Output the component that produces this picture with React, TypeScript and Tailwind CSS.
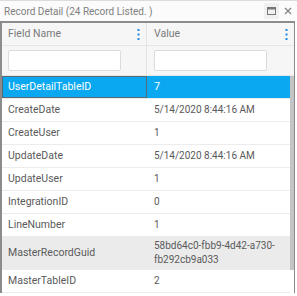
import React from 'react';

const ROWS: { name: string; value: string }[] = [
  { name: 'UserDetailTableID', value: '7' },
  { name: 'CreateDate', value: '5/14/2020 8:44:16 AM' },
  { name: 'CreateUser', value: '1' },
  { name: 'UpdateDate', value: '5/14/2020 8:44:16 AM' },
  { name: 'UpdateUser', value: '1' },
  { name: 'IntegrationID', value: '0' },
  { name: 'LineNumber', value: '1' },
  { name: 'MasterRecordGuid', value: '58bd64c0-fbb9-4d42-a730-fb292cb9a033' },
  { name: 'MasterTableID', value: '2' },
];

const Dots = () => (
  <svg width="3" height="11" viewBox="0 0 3 11" className="shrink-0">
    <rect x="0.5" y="0" width="2" height="2" fill="#1e88e5" />
    <rect x="0.5" y="4.5" width="2" height="2" fill="#1e88e5" />
    <rect x="0.5" y="9" width="2" height="2" fill="#1e88e5" />
  </svg>
);

export default function App() {
  return (
    <div
      className="w-[297px] h-[296px] overflow-hidden bg-white text-[#5a5a5a]"
      style={{ fontFamily: 'Roboto, "Liberation Sans", sans-serif' }}
    >
      {/* Title bar */}
      <div className="h-[21px] flex items-center border-t border-[#dcdcdc] bg-[#fbfbfb] pl-[4px] pr-[5px]">
        <span className="text-[10px] text-[#808080] flex-1 whitespace-nowrap">Record Detail (24 Record Listed. )</span>
        <div className="w-[15px] h-[16px] bg-[#f0f0f0] flex items-center justify-center mr-[5px]">
          <svg width="9" height="8" viewBox="0 0 9 8">
            <rect x="0.5" y="0.5" width="8" height="7" fill="none" stroke="#777" />
            <rect x="0.5" y="0.5" width="8" height="2" fill="#777" />
          </svg>
        </div>
        <svg width="8" height="8" viewBox="0 0 8 8">
          <path d="M1 1 L7 7 M7 1 L1 7" stroke="#888" strokeWidth="1.4" />
        </svg>
      </div>

      {/* Grid */}
      <div className="w-[295px] border-l-2 border-t-2 border-r border-[#8c8c8c]">
        {/* Header */}
        <div className="flex h-[23px] bg-[#f6f6f6] border-b border-[#e6e6e6] text-[10.5px] text-[#7a7a7a]">
          <div className="w-[145px] flex items-center justify-between pl-[6px] pr-[6px] border-r border-[#e3e3e3]">
            <span>Field Name</span>
            <Dots />
          </div>
          <div className="flex-1 flex items-center justify-between pl-[7px] pr-[6px]">
            <span>Value</span>
            <Dots />
          </div>
        </div>
        {/* Filter row */}
        <div className="flex h-[30px] bg-[#f6f6f6] border-b border-[#e6e6e6]">
          <div className="w-[145px] flex items-center pl-[6px] border-r border-[#e3e3e3]">
            <div className="w-[113px] h-[21px] bg-white border border-[#dcdcdc] rounded-[2px]" />
          </div>
          <div className="flex-1 flex items-center pl-[7px]">
            <div className="w-[113px] h-[21px] bg-white border border-[#dcdcdc] rounded-[2px]" />
          </div>
        </div>
        {/* Body */}
        <div className="flex">
          <div className="flex-1 flex flex-col">
            {ROWS.map((r, i) => {
              const sel = i === 0;
              const grey = r.name === 'MasterRecordGuid';
              return (
                <div
                  key={r.name}
                  className={`flex border-b border-[#ececec] ${
                    sel ? 'bg-[#0aa8f0] text-white' : grey ? 'bg-[#ebebeb]' : 'bg-white'
                  }`}
                >
                  <div
                    className={`w-[145px] flex items-center text-[10.5px] ${
                      sel ? 'border border-[#5a6a75] pl-[5px]' : 'pl-[6px]'
                    } ${grey ? 'min-h-[32px]' : 'min-h-[22px]'}`}
                  >
                    {r.name}
                  </div>
                  <div className={`flex-1 flex items-center pl-[7px] pr-[14px] leading-[14px] ${sel ? 'text-[11px]' : 'text-[10px]'}`}>
                    {r.value}
                  </div>
                </div>
              );
            })}
          </div>
          <div className="w-[4px] flex flex-col bg-white">
            <div className="h-[194px] bg-[#c4c4c4]" />
          </div>
        </div>
      </div>
    </div>
  );
}
